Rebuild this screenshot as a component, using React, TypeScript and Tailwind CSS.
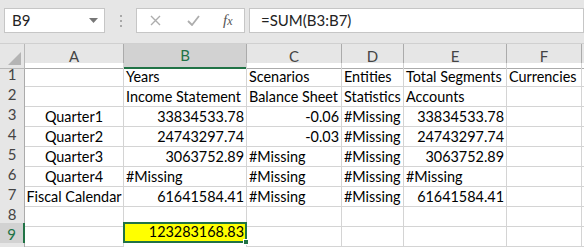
import React from "react";

type Cell = { v?: string; right?: boolean; center?: boolean };

const cols = ["A", "B", "C", "D", "E", "F"];

const rows: Cell[][] = [
  [{}, { v: "Years" }, { v: "Scenarios" }, { v: "Entities" }, { v: "Total Segments" }, { v: "Currencies" }],
  [{}, { v: "Income Statement" }, { v: "Balance Sheet" }, { v: "Statistics" }, { v: "Accounts" }, {}],
  [{ v: "Quarter1", center: true }, { v: "33834533.78", right: true }, { v: "-0.06", right: true }, { v: "#Missing" }, { v: "33834533.78", right: true }, {}],
  [{ v: "Quarter2", center: true }, { v: "24743297.74", right: true }, { v: "-0.03", right: true }, { v: "#Missing" }, { v: "24743297.74", right: true }, {}],
  [{ v: "Quarter3", center: true }, { v: "3063752.89", right: true }, { v: "#Missing" }, { v: "#Missing" }, { v: "3063752.89", right: true }, {}],
  [{ v: "Quarter4", center: true }, { v: "#Missing" }, { v: "#Missing" }, { v: "#Missing" }, { v: "#Missing" }, {}],
  [{ v: "Fiscal Calendar", center: true }, { v: "61641584.41", right: true }, { v: "#Missing" }, { v: "#Missing" }, { v: "61641584.41", right: true }, {}],
  [{}, {}, {}, {}, {}, {}],
  [{}, { v: "123283168.83", right: true }, {}, {}, {}, {}],
  [{}, {}, {}, {}, {}, {}],
];

const gridCols = "grid grid-cols-[25px_99px_123px_95px_62px_103px_75px_1fr]";

const App = () => {
  return (
    <div className="w-[584px] h-[247px] overflow-hidden bg-white text-[#000] font-['Lato','Liberation_Sans',sans-serif] text-[14.4px]">
      {/* formula bar */}
      <div className="h-[43px] bg-[#e6e6e6] flex items-start pt-[8px] pl-[4px] gap-0">
        <div className="w-[101px] h-[25px] bg-white border border-[#c6c6c6] flex items-center justify-between pl-[7px] pr-[6px]">
          <span className="text-[15px] text-[#222]">B9</span>
          <svg width="9" height="5" viewBox="0 0 9 5">
            <path d="M0 0 L9 0 L4.5 5 Z" fill="#777" />
          </svg>
        </div>
        <div className="w-[31px] h-[25px] flex flex-col items-center justify-center gap-[3px]">
          <span className="w-[2px] h-[2px] bg-[#a8a8a8]" />
          <span className="w-[2px] h-[2px] bg-[#a8a8a8]" />
          <span className="w-[2px] h-[2px] bg-[#a8a8a8]" />
        </div>
        <div className="w-[109px] h-[25px] bg-white border border-[#c6c6c6] flex items-center">
          <svg className="ml-[13px]" width="11" height="11" viewBox="0 0 11 11">
            <path d="M1 1 L10 10 M10 1 L1 10" stroke="#adadad" strokeWidth="1.4" />
          </svg>
          <svg className="ml-[26px]" width="13" height="11" viewBox="0 0 13 11">
            <path d="M1 6 L5 10 L12 1" stroke="#adadad" strokeWidth="1.8" fill="none" />
          </svg>
          <span className="ml-[23px] font-['Liberation_Serif',serif] italic text-[15px] text-[#555] leading-none">
            f<span className="text-[12px]">x</span>
          </span>
        </div>
        <div className="ml-[4px] flex-1 h-[25px] bg-white border border-[#c6c6c6] flex items-center pl-[11px]">
          <span className="text-[15px] text-[#222]">=SUM(B3:B7)</span>
        </div>
      </div>

      {/* column headers */}
      <div className={`${gridCols} h-[20px] bg-[#e6e6e6] border-t border-[#d0d0d0]`}>
        <div className="relative border-r border-b border-[#b8b8b8]">
          <svg className="absolute right-[3px] bottom-[3px]" width="13" height="13" viewBox="0 0 13 13">
            <path d="M13 0 L13 13 L0 13 Z" fill="#b4b4b4" />
          </svg>
        </div>
        {cols.map((c) => (
          <div
            key={c}
            className={`flex items-center justify-center text-[#444] text-[15px] border-r ${
              c === "B"
                ? "bg-[#d2d2d2] text-[#217346] border-b-2 border-b-[#217346] border-r-[#ababab]"
                : "border-b border-[#ababab]"
            }`}
          >
            {c}
          </div>
        ))}
        <div className="border-b border-[#ababab]" />
      </div>

      {/* rows */}
      {rows.map((r, i) => {
        const rowNum = i + 1;
        const sel = rowNum === 9;
        return (
          <div key={i} className={`${gridCols} h-[20px]`}>
            <div
              className={`flex items-center justify-center text-[15px] border-b border-[#c8c8c8] ${
                sel
                  ? "bg-[#d2d2d2] text-[#217346] border-r-2 border-r-[#217346]"
                  : "bg-[#e6e6e6] text-[#444] border-r border-r-[#ababab]"
              }`}
            >
              {rowNum < 10 ? rowNum : ""}
            </div>
            {r.map((cell, j) => {
              const active = sel && j === 1;
              if (active) {
                return (
                  <div
                    key={j}
                    className="relative bg-[#ffff00] border-2 border-[#217346] flex items-end justify-end pr-[1px] leading-[18px] -mt-[1px] h-[21px] -ml-[1px]"
                  >
                    {cell.v}
                    <span className="absolute -right-[4px] -bottom-[4px] w-[6px] h-[6px] bg-[#217346] border border-white" />
                  </div>
                );
              }
              return (
                <div
                  key={j}
                  className={`border-r border-b border-[#d4d4d4] whitespace-nowrap overflow-visible leading-[19px] flex items-end ${
                    cell.right ? "justify-end pr-[2px]" : cell.center ? "justify-center" : "justify-start pl-[2px]"
                  }`}
                >
                  {cell.v}
                </div>
              );
            })}
            <div className="border-b border-[#d4d4d4]" />
          </div>
        );
      })}
    </div>
  );
};

export default App;
